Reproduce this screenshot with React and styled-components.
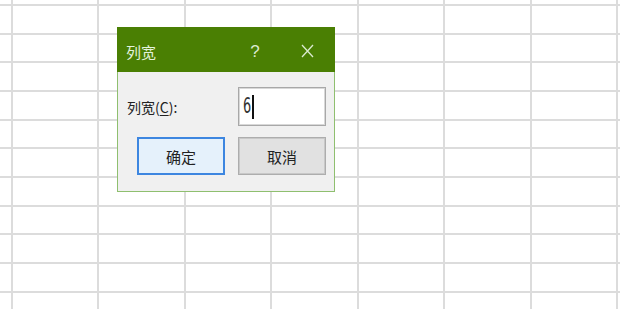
import React from "react";
import styled, { createGlobalStyle } from "styled-components";

const Global = createGlobalStyle`
  html, body { margin: 0; padding: 0; background: #ffffff; overflow: hidden; }
  body { font-family: "Noto Sans CJK SC", "Liberation Sans", sans-serif; }
`;

const Page = styled.div`
  position: relative;
  width: 620px;
  height: 309px;
  overflow: hidden;
  background: #fff;
`;

const Sheet = styled.div`
  display: grid;
  grid-template-columns: 12.7px repeat(8, 86.5px);
  grid-template-rows: 6px repeat(11, 28.67px);
`;

const Cell = styled.div`
  box-sizing: border-box;
  border-right: 2px solid #dcdcdc;
  border-bottom: 2px solid #dcdcdc;
`;

const Dialog = styled.div`
  position: absolute;
  left: 117px;
  top: 27px;
  width: 218px;
  box-sizing: border-box;
  border: 1px solid #8fbf6f;
  border-top: none;
  background: #f0f0f0;
  display: flex;
  flex-direction: column;
`;

const TitleBar = styled.div`
  height: 45px;
  background: #4a7f03;
  display: flex;
  align-items: center;
  padding: 3px 0 0 9px;
  box-sizing: border-box;
  margin: 0 -1px;
`;

const Title = styled.div`
  flex: 1;
  color: #e2f2dc;
  font-size: 15px;
  line-height: 1;
`;

const TitleButton = styled.div`
  width: ${(p) => p.$w}px;
  margin-right: ${(p) => p.$mr}px;
  display: flex;
  justify-content: center;
  align-items: center;
  color: #dbead0;
  font-family: "Liberation Sans", "DejaVu Sans", sans-serif;
  font-size: 17px;
  line-height: 1;
`;

const Body = styled.div`
  padding: 15px 8px 16px 9px;
  display: flex;
  flex-direction: column;
  gap: 11px;
`;

const FieldRow = styled.div`
  display: flex;
  align-items: center;
  justify-content: space-between;
`;

const Label = styled.div`
  font-size: 14px;
  color: #222;
  padding-top: 1px;
  u { text-decoration: underline; text-underline-offset: 2px; }
`;

const Field = styled.div`
  width: 88px;
  height: 39px;
  box-sizing: border-box;
  border: 1px solid #a8a8a8;
  box-shadow: inset 0 0 0 1px #d8d8d8;
  background: #fff;
  display: flex;
  align-items: center;
  padding-left: 4px;
`;

const Value = styled.span`
  font-family: "Liberation Sans Narrow", "DejaVu Sans Condensed", "Liberation Sans", sans-serif;
  font-size: 21px;
  color: #333;
  line-height: 1;
  display: inline-block;
  transform: scaleX(0.68);
  transform-origin: left center;
  margin-right: -3px;
`;

const Caret = styled.span`
  display: inline-block;
  width: 2px;
  height: 24px;
  background: #111;
`;

const ButtonRow = styled.div`
  display: flex;
  justify-content: flex-end;
  gap: 13px;
`;

const Button = styled.div`
  width: 88px;
  height: 38px;
  box-sizing: border-box;
  display: flex;
  align-items: center;
  justify-content: center;
  font-size: 15px;
  color: #222;
  background: ${(p) => (p.$primary ? "#e5f1fb" : "#e1e1e1")};
  border: ${(p) => (p.$primary ? "2px solid #3d86e0" : "1px solid #adadad")};
  box-shadow: ${(p) => (p.$primary ? "none" : "inset 0 0 0 1px #c8c8c8")};
`;

export default function App() {
  const cells = Array.from({ length: 9 * 12 }, (_, i) => <Cell key={i} />);
  return (
    <>
      <Global />
      <Page>
        <Sheet>{cells}</Sheet>
        <Dialog>
          <TitleBar>
            <Title>列宽</Title>
            <TitleButton $w={14} $mr={38}>?</TitleButton>
            <TitleButton $w={14} $mr={21}>
              <svg width="13" height="14" viewBox="0 0 13 14">
                <path d="M1 1 L12 13 M12 1 L1 13" stroke="#dbead0" strokeWidth="1.3" fill="none" />
              </svg>
            </TitleButton>
          </TitleBar>
          <Body>
            <FieldRow>
              <Label>
                列宽(<u>C</u>):
              </Label>
              <Field>
                <Value>6</Value>
                <Caret />
              </Field>
            </FieldRow>
            <ButtonRow>
              <Button $primary>确定</Button>
              <Button>取消</Button>
            </ButtonRow>
          </Body>
        </Dialog>
      </Page>
    </>
  );
}
